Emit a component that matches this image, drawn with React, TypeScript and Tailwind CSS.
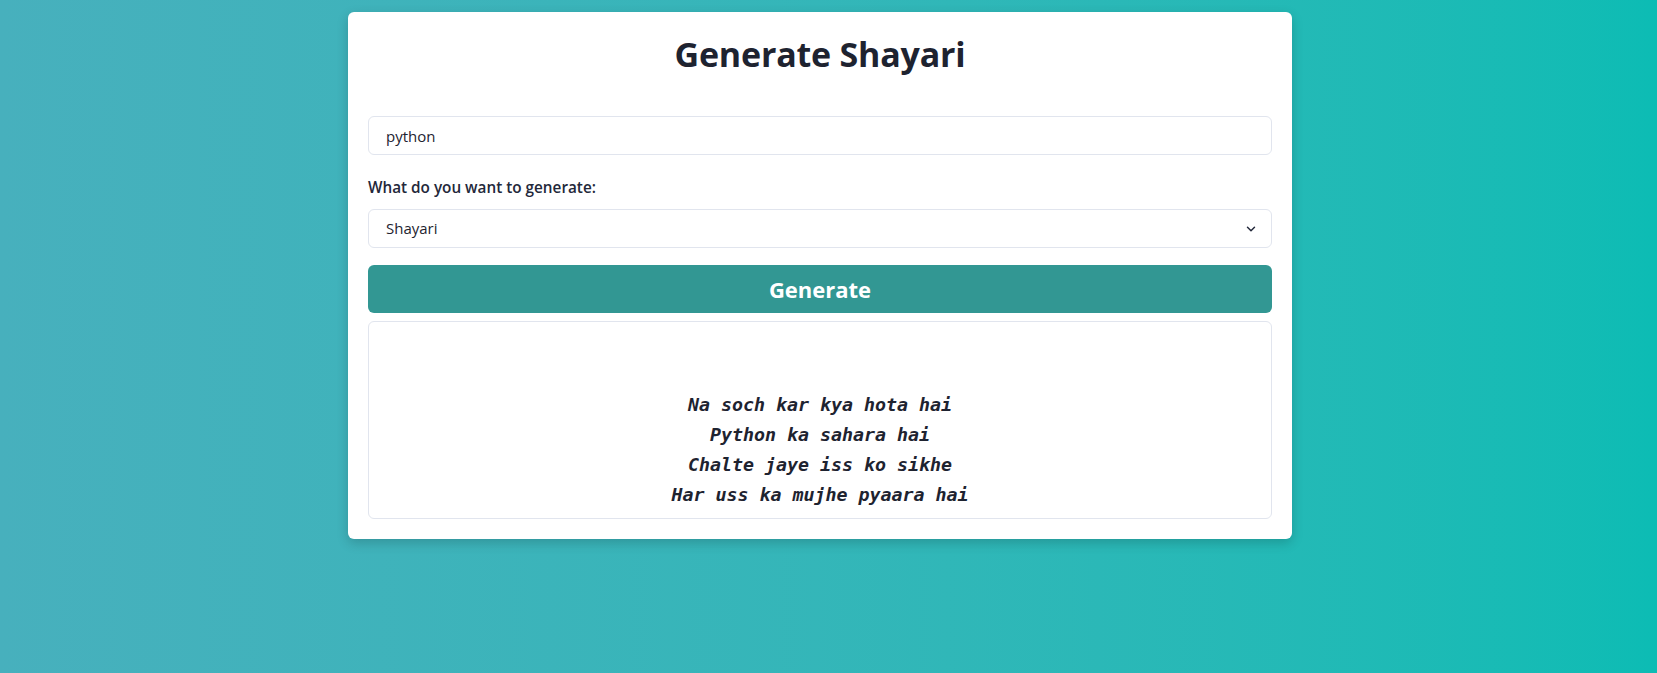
import React, { useState } from 'react';
import { ChevronDown } from 'lucide-react';

const poem = `

Na soch kar kya hota hai
Python ka sahara hai
Chalte jaye iss ko sikhe
Har uss ka mujhe pyaara hai`;

export default function App() {
  const [topic, setTopic] = useState('python');
  const [kind, setKind] = useState('Shayari');

  return (
    <div className="min-h-screen w-full bg-gradient-to-r from-[#47b0bd] to-[#0cbcb4] font-['Open_Sans',sans-serif] text-[#1e2330]">
      <div className="flex justify-center pt-3 pr-[17px]">
        {/* Card */}
        <div className="w-[944px] rounded-md bg-white px-5 pt-[18px] pb-5 shadow-[0_4px_12px_rgba(0,0,0,0.18)]">
          <h1 className="text-center text-[34px] font-bold leading-[48px] tracking-[-0.2px]">Generate Shayari</h1>

          <input
            value={topic}
            onChange={(e) => setTopic(e.target.value)}
            className="mt-[38px] block h-[39px] w-full rounded-md border border-[#e1e5ee] px-[17px] text-[15px] outline-none"
          />

          <label className="mt-[22px] block text-[15.3px] font-semibold leading-5 text-[#23283a]">
            What do you want to generate:
          </label>

          <div className="relative mt-[12px]">
            <select
              value={kind}
              onChange={(e) => setKind(e.target.value)}
              className="block h-[39px] w-full appearance-none rounded-md border border-[#e1e5ee] bg-white px-[17px] text-[15px] outline-none"
            >
              <option>Shayari</option>
              <option>Quote</option>
              <option>Poem</option>
              <option>Joke</option>
            </select>
            <ChevronDown className="pointer-events-none absolute right-[14px] top-[13px] text-[#23283a]" size={14} strokeWidth={2.5} />
          </div>

          <button className="mt-[17px] block h-[48px] w-full rounded-md bg-[#329793] text-[22px] font-bold text-white">
            Generate
          </button>

          <div className="mt-2 rounded-md border border-[#e1e5ee] px-4 py-[8px] text-center">
            <pre className="whitespace-pre-wrap font-['DejaVu_Sans_Mono',monospace] text-[18.3px] font-bold italic leading-[30px] text-[#1e2330]">
              {poem}
            </pre>
          </div>
        </div>
      </div>
    </div>
  );
}
